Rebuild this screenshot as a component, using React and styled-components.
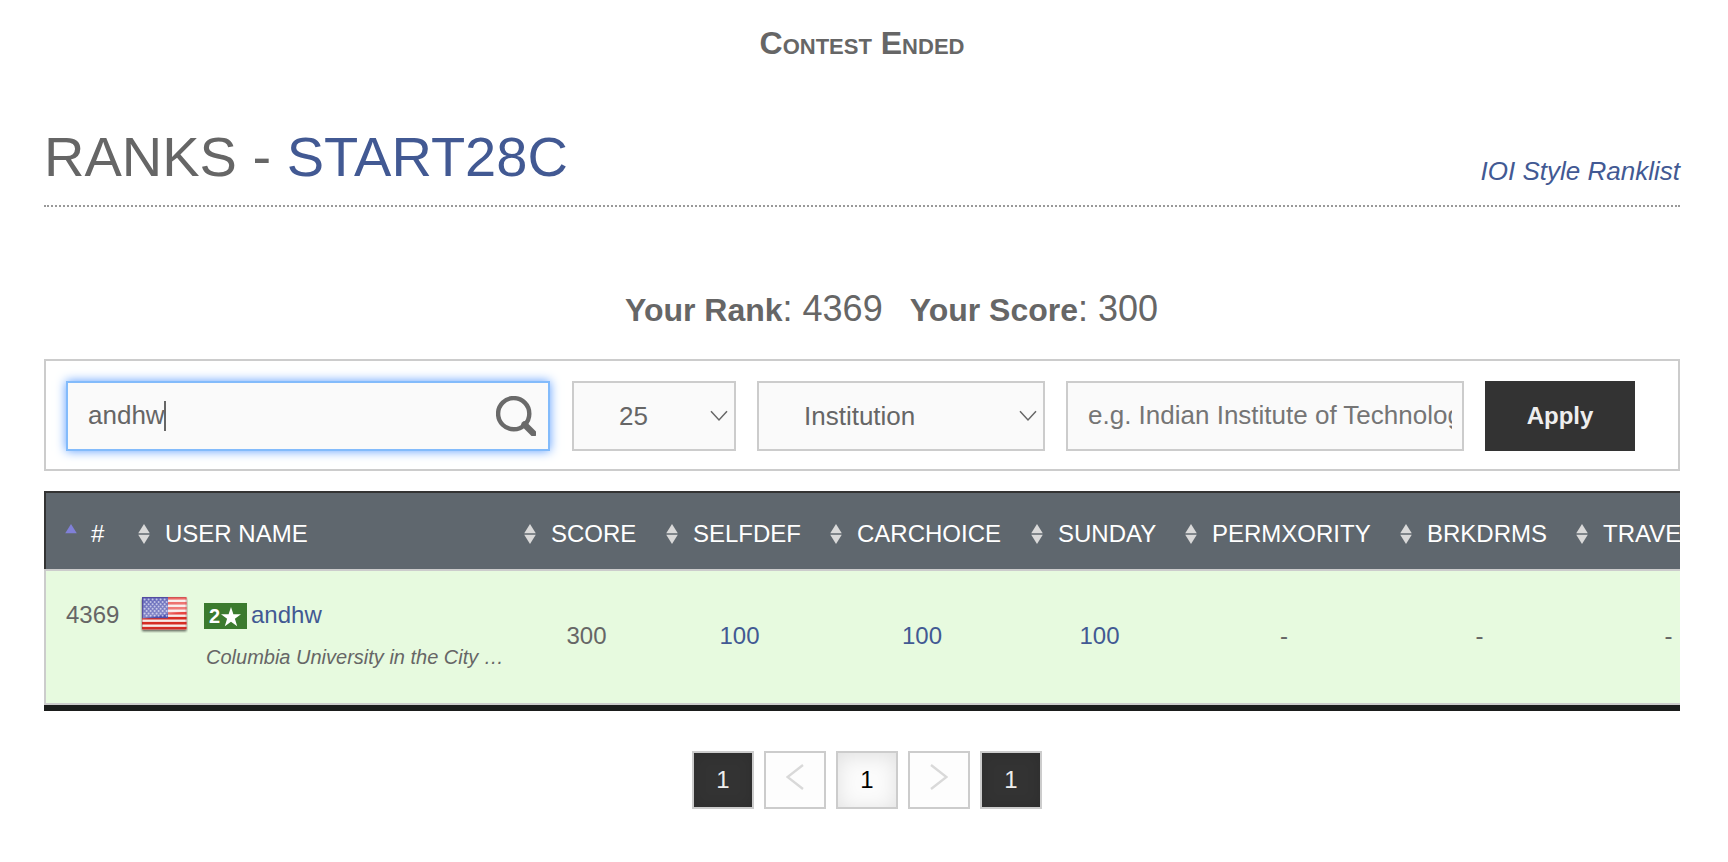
import React from "react";
import styled, { createGlobalStyle, css } from "styled-components";

const GlobalStyle = createGlobalStyle`
  *, *::before, *::after { box-sizing: border-box; }
  body {
    margin: 0;
    background: #fff;
    color: #666;
    font-family: "Liberation Sans", Arial, Helvetica, sans-serif;
    font-size: 24px;
    overflow: hidden;
  }
  a { color: #425993; text-decoration: none; }
`;

const Page = styled.main`
  height: 862px;
  padding: 23px 48px 0 44px;
  overflow: hidden;
`;

const ContestStatus = styled.div`
  text-align: center;
  font-size: 32px;
  font-weight: 700;
  line-height: 40px;
  font-variant: small-caps;
`;

const TitleBar = styled.header`
  display: flex;
  justify-content: space-between;
  align-items: flex-end;
  margin-top: 62px;
  padding-bottom: 16px;
  border-bottom: 2px dotted #999;
`;

const Title = styled.h1`
  margin: 0;
  font-size: 56px;
  font-weight: 400;
  line-height: 64px;
`;

const StyleLink = styled.a`
  margin-bottom: 3px;
  font-size: 26px;
  font-style: italic;
  line-height: 30px;
`;

const Summary = styled.div`
  display: flex;
  justify-content: center;
  align-items: baseline;
  gap: 27px;
  height: 40px;
  margin: 82px 0 30px;
  padding-left: 59px;
  font-size: 36px;
  line-height: 40px;

  strong { font-size: 32px; }
`;

const Filters = styled.form`
  display: flex;
  gap: 21px;
  height: 112px;
  padding: 20px;
  border: 2px solid #ccc;
`;

const fieldStyle = css`
  height: 70px;
  border: 2px solid #ccc;
  border-radius: 0;
  background: #fafafa;
  color: #666;
  font-family: inherit;
  font-size: 26px;
  line-height: 30px;
  outline: none;
`;

const SearchField = styled.div`
  ${fieldStyle}
  display: flex;
  align-items: center;
  width: 484px;
  margin-right: 1px;
  padding: 0 12px 0 20px;
  border-color: #83bbfb;
  box-shadow: 0 0 10px #5e9eff;

  svg { margin-left: auto; }
`;

const SearchText = styled.span`
  position: relative;
  top: -1px;
`;

const Caret = styled.span`
  width: 2px;
  height: 30px;
  margin-left: -1px;
  background: #666;
`;

const SelectWrap = styled.label`
  ${fieldStyle}
  display: flex;
  align-items: center;
  width: ${(p) => p.$width}px;
  padding-right: 6px;
`;

const Select = styled.select`
  flex: 1;
  min-width: 0;
  height: 66px;
  padding: 0 0 0 45px;
  border: 0;
  background: transparent;
  color: inherit;
  font: inherit;
  appearance: none;
  outline: none;
`;

const InstitutionInput = styled.input`
  ${fieldStyle}
  width: 398px;
  padding: 0 10px 2px 20px;
  &::placeholder { color: #757575; opacity: 1; }
`;

const ApplyButton = styled.button`
  width: 150px;
  height: 70px;
  padding: 0;
  border: 0;
  background: #333;
  color: #eee;
  font: 700 24px/30px "Liberation Sans", Arial, sans-serif;
`;

const TableFrame = styled.section`
  margin-top: 20px;
  overflow: hidden;
  border-bottom: 6px solid #1b1d1c;
`;

const columns = css`
  display: grid;
  grid-template-columns: 84px 386px 142px 164px 201px 154px 215px 176px 202px;
`;

const HeadRow = styled.div`
  ${columns}
  height: 78px;
  border-top: 2px solid #333;
  border-left: 2px solid #333;
  background: #5f676e;
  color: #fff;
`;

const HeadCell = styled.div`
  display: flex;
  gap: ${(p) => (p.$first ? 14 : 15)}px;
  height: 28px;
  margin-top: 27px;
  padding-left: ${(p) => (p.$first ? 19 : 8)}px;
  line-height: 28px;
  white-space: nowrap;

  svg { flex: none; margin-top: 4px; }
`;

const BodyRow = styled.div`
  ${columns}
  height: 136px;
  border: 2px solid #ccc;
  border-right: 0;
  background: #e7fadf;
`;

const RankCell = styled.div`
  padding: 30px 0 0 20px;
  line-height: 28px;
`;

const UserCell = styled.div`
  display: flex;
  gap: 16px;
  padding: 24px 0 0 10px;

  > svg { flex: none; }
`;

const UserLine = styled.div`
  display: flex;
  align-items: center;
  gap: 4px;
  height: 28px;
  margin-top: 6px;
  line-height: 28px;
`;

const StarBadge = styled.span`
  display: flex;
  align-items: center;
  width: 43px;
  height: 26px;
  margin-top: 2px;
  padding-left: 5px;
  background: #3b7a2e;
  color: #fff;
  font-size: 20px;
  font-weight: 700;
  line-height: 26px;

  svg { margin: 1px 0 0 1px; }
`;

const School = styled.div`
  margin: 16px 0 0 2px;
  font-size: 20px;
  font-style: italic;
  line-height: 24px;
  white-space: nowrap;
`;

const ScoreCell = styled.div`
  display: flex;
  align-items: center;
  justify-content: center;
  padding: 0 1px 2px 0;
`;

const Pager = styled.nav`
  display: flex;
  gap: 10px;
  margin: 40px 0 0 648px;
`;

const pageVariants = {
  dark: css`
    background: #333;
    color: #eee;
    box-shadow: inset 0 0 14px rgba(0, 0, 0, 0.12);
  `,
  arrow: css`background: #fdfdfd; svg { margin-bottom: 6px; }`,
  current: css`
    background: #fbfbfb;
    color: #000;
    box-shadow: inset 0 3px 20px rgba(0, 0, 0, 0.11);
  `,
};

const PageButton = styled.a`
  display: flex;
  align-items: center;
  justify-content: center;
  width: 62px;
  height: 58px;
  border: 2px solid #ccc;
  line-height: 28px;
  ${(p) => pageVariants[p.$kind]}
`;

const SearchIcon = () => (
  <svg width="40" height="40" viewBox="0 0 40 40" fill="none" stroke="#6a6a6a">
    <circle cx="17.7" cy="17.7" r="15.6" strokeWidth="4.4" />
    <path d="M28.5 28.5L37.5 37.5" strokeWidth="6.4" strokeLinecap="round" />
  </svg>
);

const DownChevron = () => (
  <svg width="18" height="12" viewBox="0 0 18 12" fill="none" stroke="#666" strokeWidth="1.5">
    <path d="M1 1.3L9 10L17 1.3" />
  </svg>
);

const SortIcon = ({ sorted }) => (
  <svg width="12" height="20" viewBox="0 0 12 20">
    <path d="M6 0L11.8 9.2H0.2Z" fill={sorted ? "#8080d8" : "#d9d9d9"} />
    {!sorted && <path d="M0.2 10.8H11.8L6 20Z" fill="#d9d9d9" />}
  </svg>
);

const Star = () => (
  <svg width="20" height="20" viewBox="0 0 20 20" fill="#fff">
    <path d="M10 0L12.4 7.2H20L13.9 11.8L16.2 19.3L10 14.7L3.8 19.3L6.1 11.8L0 7.2H7.6Z" />
  </svg>
);

const stripes = [0, 1, 2, 3, 4, 5, 6];
const starRows = [0, 1, 2, 3, 4, 5, 6, 7];

const UsFlag = () => (
  <svg width="48" height="38" viewBox="0 0 48 38">
    <defs>
      <linearGradient id="gloss" x1="0" y1="0" x2="0.25" y2="1">
        <stop offset="0" stopColor="#fff" stopOpacity="0.12" />
        <stop offset="0.6" stopColor="#fff" stopOpacity="0.32" />
        <stop offset="0.66" stopColor="#fff" stopOpacity="0" />
      </linearGradient>
      <filter id="flagShadow" x="-10%" y="-10%" width="120%" height="130%">
        <feDropShadow dx="0" dy="1.6" stdDeviation="1.2" floodColor="#000" floodOpacity="0.65" />
      </filter>
    </defs>
    <rect x="2" y="2" width="44.6" height="32.5" rx="1" fill="#f6ece9" filter="url(#flagShadow)" />
    {stripes.map((i) => (
      <rect key={i} x="2" y={2 + i * 4.98} width="44.6" height="2.6" fill={i < 4 ? "#e84743" : "#d62d24"} />
    ))}
    <rect x="2" y="2" width="26" height="21.2" fill="#4b50ae" />
    {starRows.map((r) =>
      [0, 1, 2, 3, 4, 5].map((c) => (
        <circle key={`${r}-${c}`} cx={4.6 + c * 4 + (r % 2 ? 2 : 0)} cy={4.6 + r * 2.3} r="1" fill="#b4b7e0" />
      ))
    )}
    <rect x="2" y="2" width="44.6" height="32.5" rx="1" fill="url(#gloss)" />
    <rect x="2.5" y="2.5" width="43.6" height="31.5" rx="1" fill="none" stroke="#a02c35" strokeOpacity="0.35" />
    <path d="M28 2.5H2.5V23" fill="none" stroke="#4448a8" strokeOpacity="0.7" />
  </svg>
);

const PageArrow = ({ next }) => (
  <svg width="18" height="26" viewBox="0 0 18 26" fill="none" stroke="#d9d9d9" strokeWidth="2.4">
    <path d={next ? "M1 1L16.5 13L1 25" : "M17 1L1.5 13L17 25"} />
  </svg>
);

const headings = ["#", "USER NAME", "SCORE", "SELFDEF", "CARCHOICE", "SUNDAY", "PERMXORITY", "BRKDRMS", "TRAVELPS"];
const results = ["100", "100", "100", "-", "-", "-"];

export default function App() {
  return (
    <>
      <GlobalStyle />
      <Page>
        <ContestStatus>Contest Ended</ContestStatus>
        <TitleBar>
          <Title>RANKS - <a href="#contest">START28C</a></Title>
          <StyleLink href="#ioi">IOI Style Ranklist</StyleLink>
        </TitleBar>
        <Summary>
          <span><strong>Your Rank</strong>: 4369</span>
          <span><strong>Your Score</strong>: 300</span>
        </Summary>
        <Filters>
          <SearchField>
            <SearchText>andhw</SearchText>
            <Caret />
            <SearchIcon />
          </SearchField>
          <SelectWrap $width={164}>
            <Select defaultValue="25"><option>25</option></Select>
            <DownChevron />
          </SelectWrap>
          <SelectWrap $width={288}>
            <Select defaultValue="Institution"><option>Institution</option></Select>
            <DownChevron />
          </SelectWrap>
          <InstitutionInput placeholder="e.g. Indian Institute of Technology" />
          <ApplyButton type="button">Apply</ApplyButton>
        </Filters>
        <TableFrame>
          <HeadRow>
            {headings.map((h, i) => (
              <HeadCell key={h} $first={i === 0}>
                <SortIcon sorted={i === 0} />
                {h}
              </HeadCell>
            ))}
          </HeadRow>
          <BodyRow>
            <RankCell>4369</RankCell>
            <UserCell>
              <UsFlag />
              <div>
                <UserLine>
                  <StarBadge>2<Star /></StarBadge>
                  <a href="#user">andhw</a>
                </UserLine>
                <School>Columbia University in the City …</School>
              </div>
            </UserCell>
            <ScoreCell>300</ScoreCell>
            {results.map((r, i) => (
              <ScoreCell key={i}>{r === "-" ? r : <a href="#solution">{r}</a>}</ScoreCell>
            ))}
          </BodyRow>
        </TableFrame>
        <Pager>
          <PageButton $kind="dark">1</PageButton>
          <PageButton $kind="arrow"><PageArrow /></PageButton>
          <PageButton $kind="current">1</PageButton>
          <PageButton $kind="arrow"><PageArrow next /></PageButton>
          <PageButton $kind="dark">1</PageButton>
        </Pager>
      </Page>
    </>
  );
}
